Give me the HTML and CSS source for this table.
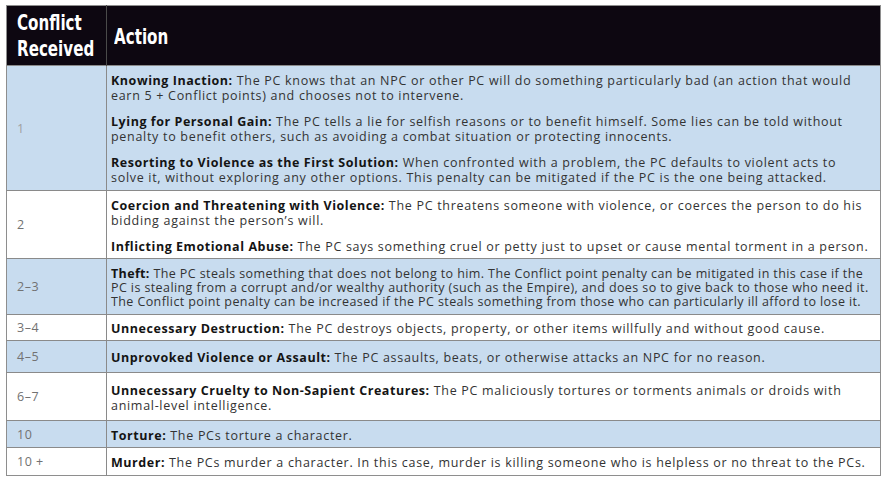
FILE: index.html
```html
<!DOCTYPE html>
<html>
<head>
<meta charset="utf-8">
<link rel="stylesheet" href="styles.css">
</head>
<body>
<table class="conflict">
  <colgroup>
    <col class="c-num">
    <col class="c-act">
  </colgroup>
  <thead>
    <tr>
      <th class="col-num"><span class="hd">Conflict<br>Received</span></th>
      <th class="col-action"><span class="hd">Action</span></th>
    </tr>
  </thead>
  <tbody>
    <tr class="blue r1">
      <td class="num">1</td>
      <td class="act">
        <p><b>Knowing Inaction:</b> The PC knows that an NPC or other PC will do something particularly bad (an action that would earn 5 + Conflict points) and chooses not to intervene.</p>
        <p><b>Lying for Personal Gain:</b> The PC tells a lie for selfish reasons or to benefit himself. Some lies can be told without penalty to benefit others, such as avoiding a combat situation or protecting innocents.</p>
        <p><b>Resorting to Violence as the First Solution:</b> When confronted with a problem, the PC defaults to violent acts to solve&nbsp;it, without exploring any other options. This penalty can be mitigated if the PC is the one being attacked.</p>
      </td>
    </tr>
    <tr class="r2">
      <td class="num">2</td>
      <td class="act">
        <p><b>Coercion and Threatening with Violence:</b> The PC threatens someone with violence, or coerces the person to do his bidding against the person’s will.</p>
        <p><b>Inflicting Emotional Abuse:</b> The PC says something cruel or petty just to upset or cause mental torment in a person.</p>
      </td>
    </tr>
    <tr class="blue r3">
      <td class="num">2–3</td>
      <td class="act">
        <p><b>Theft:</b> The PC steals something that does not belong to him. The Conflict point penalty can be mitigated in this case if the PC is stealing from a corrupt and/or wealthy authority (such as the Empire), and does so to give back to those who need it. The Conflict point penalty can be increased if the PC steals something from those who can particularly ill afford to lose it.</p>
      </td>
    </tr>
    <tr class="r4">
      <td class="num">3–4</td>
      <td class="act"><p><b>Unnecessary Destruction:</b> The PC destroys objects, property, or other items willfully and without good cause.</p></td>
    </tr>
    <tr class="blue r5">
      <td class="num">4–5</td>
      <td class="act"><p><b>Unprovoked Violence or Assault:</b> The PC assaults, beats, or otherwise attacks an NPC for no reason.</p></td>
    </tr>
    <tr class="r6">
      <td class="num">6–7</td>
      <td class="act"><p><b>Unnecessary Cruelty to Non-Sapient Creatures:</b> The PC maliciously tortures or torments animals or droids with animal-level intelligence.</p></td>
    </tr>
    <tr class="blue r7">
      <td class="num">10</td>
      <td class="act"><p><b>Torture:</b> The PCs torture a character.</p></td>
    </tr>
    <tr class="r8">
      <td class="num">10 +</td>
      <td class="act"><p><b>Murder:</b> The PCs murder a character. In this case, murder is killing someone who is helpless or no threat to the PCs.</p></td>
    </tr>
  </tbody>
</table>
</body>
</html>
```
FILE: styles.css
```css
html, body {
  margin: 0;
  padding: 0;
  background: #ffffff;
}
body {
  padding: 5px 7px 0 6px;
  font-family: "Open Sans", "Noto Sans", sans-serif;
  color: #333333;
}
.conflict {
  width: 875px;
  border-collapse: collapse;
  border: 1px solid #8e8e8e;
  table-layout: fixed;
}
.c-num { width: 100px; }
.conflict thead th {
  background: #0d0711;
  color: #ffffff;
  font-family: "Liberation Sans Narrow", "DejaVu Sans Condensed", "DejaVu Sans", sans-serif;
  font-weight: bold;
  font-size: 21px;
  line-height: 26px;
  text-align: left;
  height: 60px;
  padding: 0 0 0 10px;
  box-sizing: border-box;
}
.conflict .hd {
  display: inline-block;
  transform: scaleX(0.8);
  transform-origin: left center;
  white-space: nowrap;
}
.conflict thead th.col-num {
  border-right: 1px solid #4a4a4a;
}
.conflict thead th.col-action {
  padding-left: 7px;
  padding-top: 3px;
}
.conflict td {
  border-top: 1px solid #8a8a8a;
  vertical-align: middle;
  font-size: 12.5px;
  line-height: 15px;
  letter-spacing: 0.7px;
}
.conflict td.num {
  border-right: 1px solid #8a8a8a;
  padding: 0 0 0 10px;
  color: #727272;
  letter-spacing: 0.5px;
}
.conflict tr.r1 td.num { color: #a0a0a0; }
.conflict td.act {
  padding: 6px 3px 4px 4px;
}
.conflict tr.r3 td.act {
  letter-spacing: 0.4px;
  line-height: 14px;
}
.conflict tr.r3 td.act b {
  letter-spacing: 0.35px;
}
.conflict tr.blue td {
  background: #c8dcef;
}
.conflict p {
  margin: 0 0 11px 0;
}
.conflict p:last-child {
  margin-bottom: 0;
}
.conflict b {
  color: #141414;
  font-weight: bold;
  letter-spacing: 0.55px;
}
.conflict tr.r1 { height: 125px; }
.conflict tr.r2 { height: 68px; }
.conflict tr.r3 { height: 56px; }
.conflict tr.r4 { height: 26px; }
.conflict tr.r5 { height: 32px; }
.conflict tr.r6 { height: 48px; }
.conflict tr.r7 { height: 27px; }
.conflict tr.r8 { height: 28px; }
```
